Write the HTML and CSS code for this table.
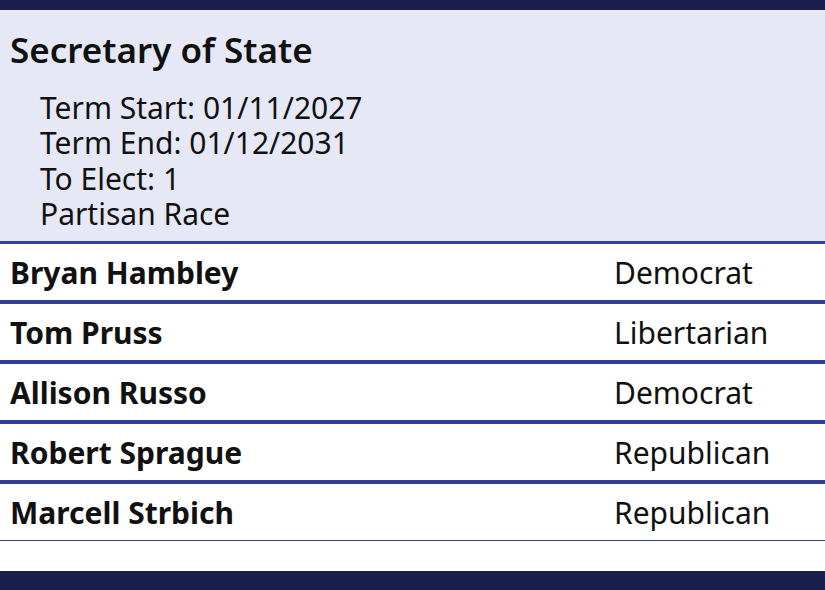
FILE: index.html
```html
<!DOCTYPE html>
<html>
<head>
<meta charset="utf-8">
<link rel="stylesheet" href="styles.css">
</head>
<body>
<div class="topbar"></div>
<section class="race">
  <h1 class="race-title">Secretary of State</h1>
  <ul class="race-details">
    <li>Term Start: 01/11/2027</li>
    <li>Term End: 01/12/2031</li>
    <li>To Elect: 1</li>
    <li>Partisan Race</li>
  </ul>
</section>
<div class="candidates">
  <div class="cand"><span class="name">Bryan Hambley</span><span class="party">Democrat</span></div>
  <div class="cand"><span class="name">Tom Pruss</span><span class="party">Libertarian</span></div>
  <div class="cand"><span class="name">Allison Russo</span><span class="party">Democrat</span></div>
  <div class="cand"><span class="name">Robert Sprague</span><span class="party">Republican</span></div>
  <div class="cand last"><span class="name">Marcell Strbich</span><span class="party">Republican</span></div>
</div>
<div class="spacer"></div>
<div class="bottombar"></div>
</body>
</html>
```
FILE: styles.css
```css
html, body {
  margin: 0;
  padding: 0;
  background: #ffffff;
  font-family: "Noto Sans", "Open Sans", sans-serif;
  color: #111111;
}
body {
  width: 825px;
  height: 590px;
  overflow: hidden;
  display: flex;
  flex-direction: column;
}
.topbar {
  height: 10px;
  background: #1b1e4c;
  flex: none;
}
.race {
  box-sizing: border-box;
  background: #e6e8f5;
  padding: 20px 10px 0 10px;
  border-bottom: 3px solid #343f98;
  height: 234px;
  flex: none;
}
.race-title {
  margin: 0;
  font-size: 35px;
  font-weight: 600;
  line-height: 40px;
}
.race-details {
  list-style: none;
  margin: 20px 0 0 0;
  padding: 0 0 0 30px;
  font-size: 30px;
  line-height: 35.3px;
}
.cand {
  display: grid;
  grid-template-columns: 604px 1fr;
  align-items: center;
  height: 56px;
  padding-left: 10px;
  border-bottom: 4px solid #343f98;
  font-size: 30px;
}
.cand.last {
  border-bottom: 1.5px solid #343f98;
}
.name {
  font-weight: 700;
}
.spacer {
  flex: 1;
}
.bottombar {
  height: 19px;
  background: #1b1e4c;
  flex: none;
}
```
